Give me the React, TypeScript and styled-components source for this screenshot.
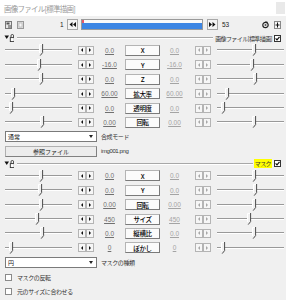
import React from "react";
import styled, { createGlobalStyle } from "styled-components";

const Global = createGlobalStyle`
  html, body { margin: 0; padding: 0; background: #f0f0f0; }
  body { font-family: "Liberation Sans", "Noto Sans CJK JP", sans-serif; }
`;

const Window = styled.div`
  width: 286px;
  height: 300px;
  background: #f0f0f0;
  overflow: hidden;
  display: flex;
  flex-direction: column;
  font-family: "Liberation Sans", "Noto Sans CJK JP", sans-serif;
  color: #000;
`;

const TitleBar = styled.div`
  height: 16px;
  flex-shrink: 0;
  background: #fff;
  display: flex;
  align-items: center;
  justify-content: space-between;
  padding-left: 4px;
`;

const TitleText = styled.span`
  font-family: "Noto Sans CJK JP", sans-serif;
  font-size: 7.5px;
  letter-spacing: -0.75px;
  color: #9a9a9a;
`;

const CloseBox = styled.div`
  width: 9px;
  height: 12px;
  margin-right: 1px;
  background: #e9e9e9;
`;

const Toolbar = styled.div`
  height: 17px;
  flex-shrink: 0;
  display: flex;
  align-items: center;
  padding-left: 5px;
  padding-right: 5px;
`;

const ToolIcon = styled.svg<{ $ml?: number }>`
  display: block;
  flex-shrink: 0;
  margin-left: ${(p) => p.$ml ?? 0}px;
`;

const FrameNum = styled.span<{ $ml: number; $w: number }>`
  margin-left: ${(p) => p.$ml}px;
  width: ${(p) => p.$w}px;
  font-size: 6.5px;
  color: #222;
  text-align: left;
  flex-shrink: 0;
`;

const SeekBtn = styled.div`
  width: 11px;
  height: 11px;
  box-sizing: border-box;
  border: 1px solid #a8a8a8;
  background: #f4f4f4;
  display: flex;
  align-items: center;
  justify-content: center;
  flex-shrink: 0;
`;

const RangeBar = styled.div`
  position: relative;
  width: 122px;
  height: 11px;
  margin: 0 4px 0 3px;
  box-sizing: border-box;
  border: 1px solid #9a9a9a;
  background: #fafafa;
  display: flex;
  flex-direction: column;
  justify-content: flex-end;
  flex-shrink: 0;
`;

const RangeFill = styled.div`
  height: 6px;
  background: #3d86e4;
`;

const FrameMark = styled.div`
  position: absolute;
  left: 0;
  top: 0;
  width: 2px;
  height: 3px;
  background: #e8576a;
`;

const Spacer = styled.div`
  flex: 1;
`;

const SectionHead = styled.div`
  height: 10.3px;
  flex-shrink: 0;
  display: flex;
  align-items: center;
  padding-left: 4px;
  padding-right: 5px;
`;

const HeadLine = styled.div<{ $mr: number }>`
  flex: 1;
  height: 1px;
  margin: 0 ${(p) => p.$mr}px 0 3px;
  background: #a8a8a8;
  border-bottom: 1px solid #fff;
`;

const HeadLabel = styled.span<{ $hl?: boolean }>`
  font-family: "Noto Sans CJK JP", sans-serif;
  font-size: 6px;
  letter-spacing: -0.6px;
  line-height: 9px;
  padding: 0 ${(p) => (p.$hl ? 1 : 0)}px;
  background: ${(p) => (p.$hl ? "#ffff00" : "transparent")};
  color: #333;
  margin-right: 2px;
`;

const CheckBox = styled.div`
  width: 7px;
  height: 7px;
  box-sizing: border-box;
  border: 1px solid #333;
  background: #fff;
  display: flex;
  align-items: center;
  justify-content: center;
  flex-shrink: 0;
`;

const ParamRow = styled.div`
  height: 14.4px;
  flex-shrink: 0;
  display: flex;
  align-items: center;
  padding-left: 5px;
`;

const SliderBox = styled.div<{ $ml?: number }>`
  position: relative;
  width: 67px;
  height: 12px;
  margin-left: ${(p) => p.$ml ?? 0}px;
  flex-shrink: 0;
`;

const Groove = styled.div`
  position: absolute;
  left: 0;
  right: 0;
  top: 5px;
  height: 1px;
  background: #999;
  border-bottom: 1px solid #fff;
`;

const ThumbSvg = styled.svg`
  position: absolute;
  top: 0;
  display: block;
`;

const ArrowPair = styled.div`
  display: flex;
  width: 16px;
  height: 9px;
  margin-left: 6px;
  flex-shrink: 0;
`;

const ArrowBtn = styled.div`
  width: 8px;
  height: 9px;
  box-sizing: border-box;
  border: 1px solid #b4b4b4;
  background: #f6f6f6;
  display: flex;
  align-items: center;
  justify-content: center;
`;

const Tri = styled.div<{ $dir: "l" | "r"; $dim?: boolean }>`
  width: 0;
  height: 0;
  border-top: 2px solid transparent;
  border-bottom: 2px solid transparent;
  ${(p) =>
    p.$dir === "l"
      ? `border-right: 2px solid ${p.$dim ? "#a8a8a8" : "#111"};`
      : `border-left: 2px solid ${p.$dim ? "#a8a8a8" : "#111"};`}
`;

const Value = styled.span<{ $w: number; $dim?: boolean }>`
  width: ${(p) => p.$w}px;
  flex-shrink: 0;
  text-align: center;
  font-size: 6.5px;
  line-height: 9px;
  color: ${(p) => (p.$dim ? "#a4a4a4" : "#707070")};
  text-decoration: underline;
`;

const LabelBtn = styled.div`
  width: 35px;
  height: 11px;
  flex-shrink: 0;
  box-sizing: border-box;
  border: 1px solid #b4b4b4;
  border-right-color: #7a7a7a;
  border-bottom-color: #7a7a7a;
  background: #fbfbfb;
  display: flex;
  align-items: center;
  justify-content: center;
  font-family: "Noto Sans CJK JP", sans-serif;
  font-size: 6.5px;
  font-weight: 500;
  letter-spacing: -0.4px;
  color: #000;
`;

const CtrlRow = styled.div<{ $h: number }>`
  height: ${(p) => p.$h}px;
  flex-shrink: 0;
  display: flex;
  align-items: center;
  padding-left: 5px;
`;

const Combo = styled.div`
  width: 92px;
  height: 11px;
  box-sizing: border-box;
  border: 1px solid #7a7a7a;
  background: #fff;
  display: flex;
  align-items: center;
  justify-content: space-between;
  padding-left: 2px;
  padding-right: 1px;
  flex-shrink: 0;
  font-family: "Noto Sans CJK JP", sans-serif;
  font-size: 6px;
  color: #111;
`;

const ComboArrow = styled.div`
  width: 0;
  height: 0;
  border-left: 2px solid transparent;
  border-right: 2px solid transparent;
  border-top: 3px solid #222;
  margin-right: 2px;
`;

const SideText = styled.span`
  margin-left: 4px;
  font-family: "Liberation Sans", "Noto Sans CJK JP", sans-serif;
  font-size: 6px;
  letter-spacing: -0.4px;
  color: #333;
`;

const PushBtn = styled.div`
  width: 92px;
  height: 11px;
  box-sizing: border-box;
  border: 1px solid #b0b0b0;
  border-right-color: #808080;
  border-bottom-color: #808080;
  background: #ececec;
  display: flex;
  align-items: center;
  justify-content: center;
  flex-shrink: 0;
  font-family: "Noto Sans CJK JP", sans-serif;
  font-size: 6px;
  color: #222;
`;

const SmallBox = styled.div`
  width: 7px;
  height: 7px;
  box-sizing: border-box;
  border: 1px solid #8a8a8a;
  background: #fff;
  flex-shrink: 0;
`;

const CheckLabel = styled.span`
  margin-left: 5px;
  font-family: "Noto Sans CJK JP", sans-serif;
  font-size: 6px;
  letter-spacing: -0.4px;
  color: #333;
`;

const Check = () => (
  <svg width="5" height="5" viewBox="0 0 5 5">
    <path d="M0.6 2.4 L2 3.8 L4.5 0.8" fill="none" stroke="#111" strokeWidth="1.2" />
  </svg>
);

const Lock = () => (
  <svg width="10" height="8" viewBox="0 0 10 8" style={{ display: "block" }}>
    <path d="M0.5 1.5 L5 1.5 L2.75 5 Z" fill="#111" />
    <path d="M7 3.5 V1.8 a1.3 1.3 0 0 1 2.6 0 V3.5" fill="none" stroke="#333" strokeWidth="0.9" />
    <rect x="6.3" y="3.6" width="4" height="4" fill="#fff" stroke="#333" strokeWidth="0.9" />
  </svg>
);

const Thumb = ({ pos }: { pos: number }) => (
  <ThumbSvg width="5" height="12" viewBox="0 0 5 12" style={{ left: pos - 2 }}>
    <path d="M0.5 0.5 H3.5 V8.5 L1.5 11.3 L0.5 9 Z" fill="#f0f0f0" />
    <path d="M0.5 9 V0.5 H3" fill="none" stroke="#ffffff" strokeWidth="1" />
    <path d="M3.6 0 V8.6 L1.2 11.6" fill="none" stroke="#4a4a4a" strokeWidth="1" />
  </ThumbSvg>
);

const Slider = ({ pos, ml }: { pos: number; ml?: number }) => (
  <SliderBox $ml={ml}>
    <Groove />
    <Thumb pos={pos} />
  </SliderBox>
);

const Arrows = ({ dim }: { dim?: boolean }) => (
  <ArrowPair>
    <ArrowBtn>
      <Tri $dir="l" $dim={dim} />
    </ArrowBtn>
    <ArrowBtn>
      <Tri $dir="r" $dim={dim} />
    </ArrowBtn>
  </ArrowPair>
);

type Param = { label: string; l: string; r: string; lp: number; rp: number };

const mainParams: Param[] = [
  { label: "X", l: "0.0", r: "0.0", lp: 36, rp: 37 },
  { label: "Y", l: "-16.0", r: "-16.0", lp: 34, rp: 35 },
  { label: "Z", l: "0.0", r: "0.0", lp: 36, rp: 38 },
  { label: "拡大率", l: "60.00", r: "60.00", lp: 8, rp: 10 },
  { label: "透明度", l: "0.0", r: "0.0", lp: 6, rp: 6 },
  { label: "回転", l: "0.00", r: "0.00", lp: 37, rp: 37 },
];

const maskParams: Param[] = [
  { label: "X", l: "0.0", r: "0.0", lp: 36, rp: 37 },
  { label: "Y", l: "0.0", r: "0.0", lp: 35, rp: 38 },
  { label: "回転", l: "0.00", r: "0.00", lp: 36, rp: 37 },
  { label: "サイズ", l: "450", r: "450", lp: 32, rp: 32 },
  { label: "縦横比", l: "0.0", r: "0.0", lp: 37, rp: 37 },
  { label: "ぼかし", l: "0", r: "0", lp: 6, rp: 6 },
];

const ParamLine = ({ p }: { p: Param }) => (
  <ParamRow>
    <Slider pos={p.lp} />
    <Arrows />
    <Value $w={31}>{p.l}</Value>
    <LabelBtn>{p.label}</LabelBtn>
    <Value $w={29} $dim>
      {p.r}
    </Value>
    <Arrows dim />
    <Slider pos={p.rp} ml={6} />
  </ParamRow>
);

export default function App() {
  return (
    <Window>
      <Global />
      <TitleBar>
        <TitleText>画像ファイル[標準描画]</TitleText>
        <CloseBox />
      </TitleBar>

      <Toolbar>
        <ToolIcon width="7" height="8" viewBox="0 0 7 8">
          <rect x="0.5" y="0.5" width="6" height="7" fill="#e6e6e6" stroke="#777" />
          <rect x="1.5" y="1.5" width="3" height="2" fill="#555" />
          <rect x="3" y="4" width="3" height="3" fill="#999" />
        </ToolIcon>
        <ToolIcon width="7" height="8" viewBox="0 0 7 8" $ml={5}>
          <rect x="0.5" y="0.5" width="6" height="7" fill="#e0e0e0" stroke="#999" />
          <rect x="2" y="2" width="3" height="4" fill="#f6f6f6" stroke="#aaa" strokeWidth="0.6" />
        </ToolIcon>
        <FrameNum $ml={36} $w={7}>1</FrameNum>
        <SeekBtn>
          <svg width="7" height="5" viewBox="0 0 7 5">
            <path d="M3.5 0 L0.5 2.5 L3.5 5 Z M7 0 L4 2.5 L7 5 Z" fill="#111" />
          </svg>
        </SeekBtn>
        <RangeBar>
          <RangeFill />
          <FrameMark />
        </RangeBar>
        <SeekBtn>
          <svg width="7" height="5" viewBox="0 0 7 5">
            <path d="M0 0 L3 2.5 L0 5 Z M3.5 0 L6.5 2.5 L3.5 5 Z" fill="#111" />
          </svg>
        </SeekBtn>
        <FrameNum $ml={4} $w={12}>53</FrameNum>
        <Spacer />
        <ToolIcon width="7" height="8" viewBox="0 0 7 8">
          <circle cx="3.5" cy="4" r="2.7" fill="none" stroke="#222" strokeWidth="1.2" />
          <circle cx="3.5" cy="4" r="1" fill="#555" />
          <path d="M3.5 0.5 L6 1.5" stroke="#222" strokeWidth="0.8" />
        </ToolIcon>
        <ToolIcon width="7" height="8" viewBox="0 0 7 8" $ml={5}>
          <rect x="0.5" y="0.5" width="6" height="7" fill="#f4f4f4" stroke="#888" />
          <path d="M3.5 1.5 V6.5 M1.5 4 H5.5" stroke="#111" strokeWidth="1" />
        </ToolIcon>
      </Toolbar>

      <SectionHead>
        <Lock />
        <HeadLine $mr={2} />
        <HeadLabel>画像ファイル[標準描画]</HeadLabel>
        <CheckBox>
          <Check />
        </CheckBox>
      </SectionHead>

      {mainParams.map((p) => (
        <ParamLine key={"m" + p.label} p={p} />
      ))}

      <CtrlRow $h={14.4}>
        <Combo>
          <span>通常</span>
          <ComboArrow />
        </Combo>
        <SideText>合成モード</SideText>
      </CtrlRow>
      <CtrlRow $h={14.4}>
        <PushBtn>参照ファイル</PushBtn>
        <SideText>img001.png</SideText>
      </CtrlRow>

      <SectionHead>
        <Lock />
        <HeadLine $mr={1} />
        <HeadLabel $hl>マスク</HeadLabel>
        <CheckBox>
          <Check />
        </CheckBox>
      </SectionHead>

      {maskParams.map((p) => (
        <ParamLine key={"k" + p.label} p={p} />
      ))}

      <CtrlRow $h={15.5}>
        <Combo>
          <span>円</span>
          <ComboArrow />
        </Combo>
        <SideText>マスクの種類</SideText>
      </CtrlRow>
      <CtrlRow $h={14}>
        <SmallBox />
        <CheckLabel>マスクの反転</CheckLabel>
      </CtrlRow>
      <CtrlRow $h={13}>
        <SmallBox />
        <CheckLabel>元のサイズに合わせる</CheckLabel>
      </CtrlRow>
    </Window>
  );
}
